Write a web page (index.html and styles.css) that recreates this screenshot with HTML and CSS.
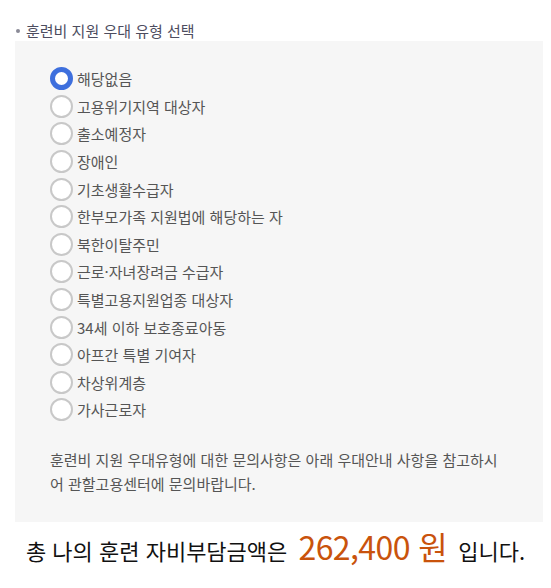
FILE: index.html
```html
<!DOCTYPE html>
<html lang="ko">
<head>
<meta charset="utf-8">
<link rel="stylesheet" href="styles.css">
</head>
<body>
<div class="page">
  <h3 class="title"><span class="dot"></span>훈련비 지원 우대 유형 선택</h3>
  <div class="box">
    <ul class="options">
      <li class="opt"><span class="radio on"></span><span>해당없음</span></li>
      <li class="opt"><span class="radio"></span><span>고용위기지역 대상자</span></li>
      <li class="opt"><span class="radio"></span><span>출소예정자</span></li>
      <li class="opt"><span class="radio"></span><span>장애인</span></li>
      <li class="opt"><span class="radio"></span><span>기초생활수급자</span></li>
      <li class="opt"><span class="radio"></span><span>한부모가족 지원법에 해당하는 자</span></li>
      <li class="opt"><span class="radio"></span><span>북한이탈주민</span></li>
      <li class="opt"><span class="radio"></span><span>근로·자녀장려금 수급자</span></li>
      <li class="opt"><span class="radio"></span><span>특별고용지원업종 대상자</span></li>
      <li class="opt"><span class="radio"></span><span>34세 이하 보호종료아동</span></li>
      <li class="opt"><span class="radio"></span><span>아프간 특별 기여자</span></li>
      <li class="opt"><span class="radio"></span><span>차상위계층</span></li>
      <li class="opt"><span class="radio"></span><span>가사근로자</span></li>
    </ul>
    <p class="note">훈련비 지원 우대유형에 대한 문의사항은 아래 우대안내 사항을 참고하시어 관할고용센터에 문의바랍니다.</p>
  </div>
  <p class="total">총 나의 훈련 자비부담금액은 <strong class="amount">262,400 원</strong> 입니다.</p>
</div>
</body>
</html>
```
FILE: styles.css
```css
* { box-sizing: border-box; }
html, body { margin: 0; padding: 0; background: #fff; }
body {
  font-family: "Noto Sans CJK KR", "Noto Sans", sans-serif;
  color: #555;
}
.page { width: 551px; }
.title {
  display: flex;
  align-items: center;
  margin: 0;
  padding: 20px 0 0 16px;
  height: 41px;
  font-size: 15px;
  font-weight: 400;
  line-height: 20px;
  color: #4d4d5f;
}
.dot {
  width: 4px;
  height: 4px;
  border-radius: 50%;
  background: #8a8a96;
  margin-right: 6px;
  flex: none;
}
.box {
  margin-left: 15px;
  width: 528px;
  background: #f6f6f6;
  padding: 24px 35px 26px 35px;
}
.options { list-style: none; margin: 0; padding: 0; }
.opt {
  display: flex;
  align-items: center;
  gap: 4px;
  height: 27.6px;
  font-size: 15px;
  color: #555;
}
.radio {
  width: 23px;
  height: 23px;
  border-radius: 50%;
  border: 2px solid #c8c8c8;
  background: #fff;
  flex: none;
}
.radio.on { border: 5px solid #3e6fdd; }
.note {
  margin: 24px 0 0 0;
  font-size: 15px;
  line-height: 24px;
  color: #555;
}
.total {
  margin: 4px 0 0 0;
  text-align: center;
  font-size: 22px;
  color: #111;
  line-height: 40px;
}
.amount {
  font-weight: 400;
  font-size: 32px;
  color: #c9530c;
  margin: 0 5px;
  letter-spacing: -0.6px;
}
```
